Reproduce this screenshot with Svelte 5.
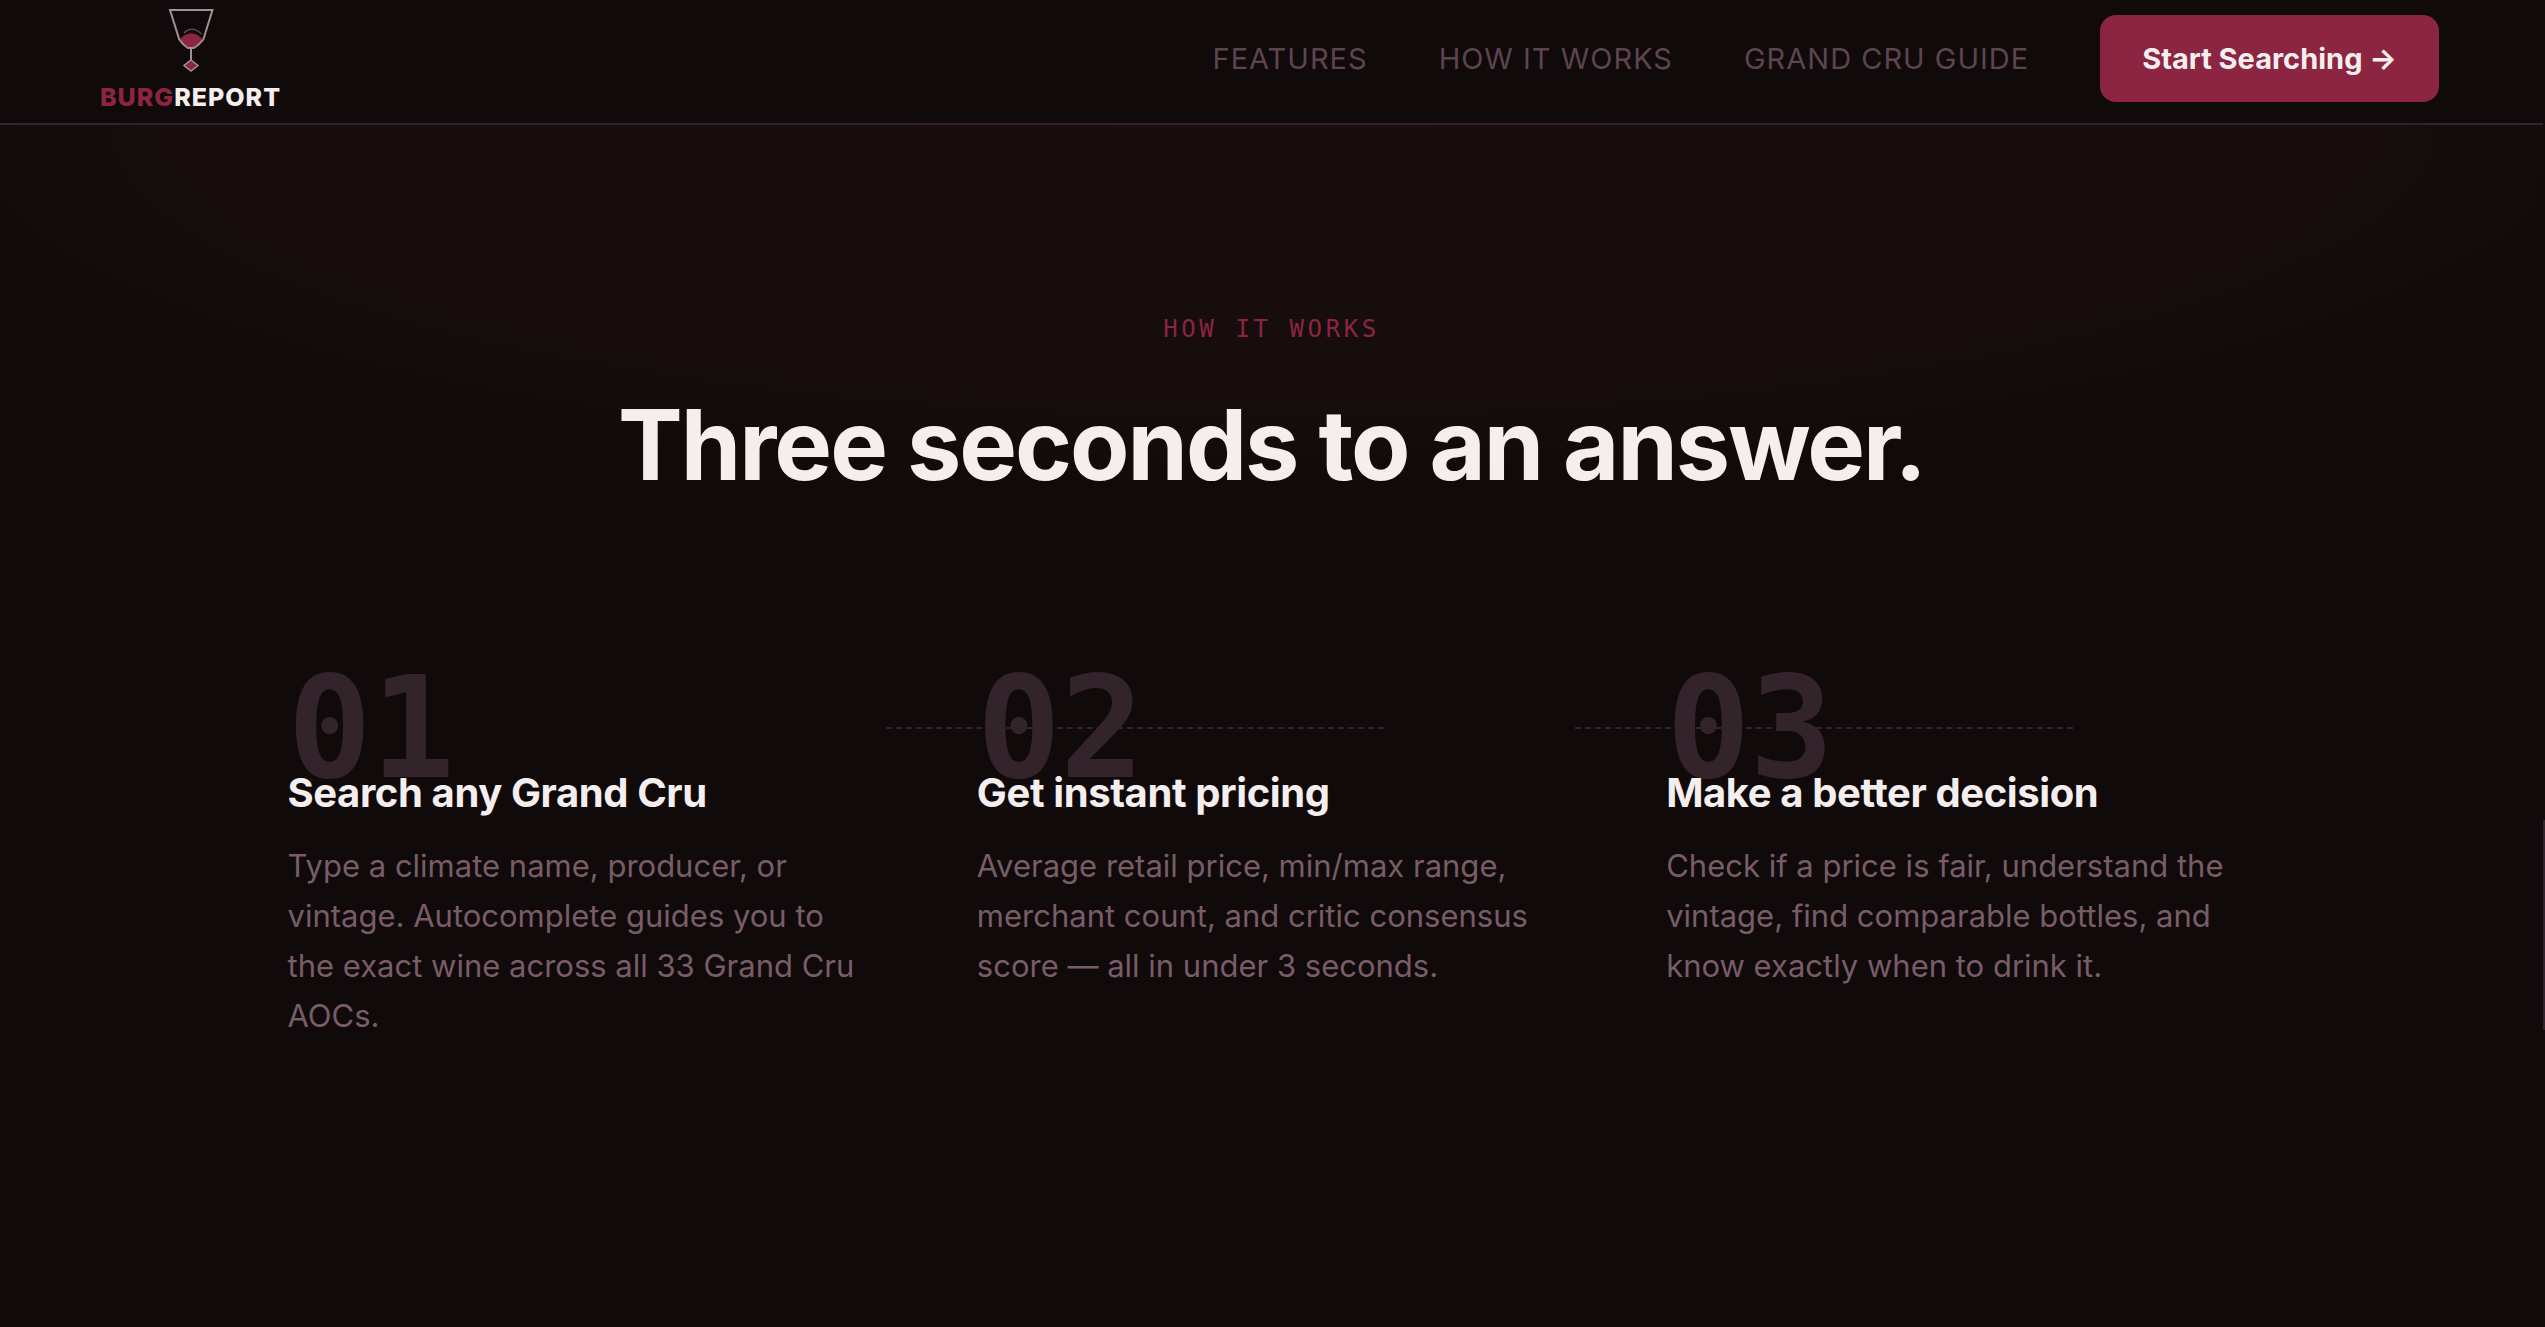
<script lang="ts">
	const links = [
		{label: "Features", href: "#features"},
		{label: "How it works", href: "#how"},
		{label: "Grand Cru Guide", href: "#guide"},
	]

	const steps = [
		{
			num: "01",
			title: "Search any Grand Cru",
			text: "Type a climate name, producer, or vintage. Autocomplete guides you to the exact wine across all 33 Grand Cru AOCs.",
		},
		{
			num: "02",
			title: "Get instant pricing",
			text: "Average retail price, min/max range, merchant count, and critic consensus score — all in under 3 seconds.",
		},
		{
			num: "03",
			title: "Make a better decision",
			text: "Check if a price is fair, understand the vintage, find comparable bottles, and know exactly when to drink it.",
		},
	]
</script>

<div class="page">
	<header>
		<a class="logo" href="#top">
			<svg viewBox="0 0 52 68" width="52" height="68" fill="none" aria-hidden="true">
				<path d="M14.5 31.5Q26 19 38 31.5Q34 37 29 40H23Q18 37 14.5 31.5Z" fill="#8b2541" />
				<path d="M5 2H47.500L38.300 31.500Q34 37 29 40H23Q18 37 14.300 31.500Z" stroke="#a08f95" stroke-width="2" />
				<path d="M19 25Q27 17 36.500 26" stroke="#6b4c5a" stroke-width="1.200" />
				<path d="M26 40V52" stroke="#a08f95" stroke-width="2" />
				<path d="M26 52L33 57.500L26 63L19 57.500Z" fill="#8b2541" stroke="#a08f95" stroke-width="1.500" />
			</svg>
			<span class="wordmark"><span class="burg">BURG</span>REPORT</span>
		</a>
		<nav>
			{#each links as link}
				<a class="link" href={link.href}>{link.label}</a>
			{/each}
			<a class="cta" href="#search">Start Searching →</a>
		</nav>
	</header>

	<section id="how">
		<p class="eyebrow">How it works</p>
		<h2>Three seconds to an answer.</h2>
		<div class="steps">
			{#each steps as step}
				<div class="step">
					<div class="num">{step.num}</div>
					<h3>{step.title}</h3>
					<p>{step.text}</p>
				</div>
			{/each}
		</div>
	</section>
</div>
<div class="thumb"></div>

<style>
	:global(body) {
		background: #100a0a;
	}

	.page {
		margin-right: 2px;
		min-height: 100vh;
		font-family: Inter, "Liberation Sans", sans-serif;
		color: #f5eeee;
		background: #100a0a;
	}

	header {
		display: flex;
		align-items: center;
		justify-content: space-between;
		box-sizing: border-box;
		height: 125px;
		padding: 0 104px 6px 100px;
		border-bottom: 2px solid #33232a;
	}

	a {
		color: inherit;
		text-decoration: none;
	}

	.logo {
		display: flex;
		flex-direction: column;
		align-items: center;
		gap: 3px;
		padding-top: 6px;
	}

	.wordmark {
		font-size: 25px;
		line-height: 36px;
		font-weight: 800;
		letter-spacing: 1px;
	}

	.burg {
		color: #8b2541;
	}

	nav {
		display: flex;
		align-items: center;
		gap: 71px;
	}

	.link {
		color: #5c454e;
		font-size: 29px;
		letter-spacing: 1px;
		text-transform: uppercase;
	}

	.cta {
		padding: 0 42px;
		border-radius: 16px;
		background: #8b2541;
		font-size: 29px;
		line-height: 87px;
		font-weight: 700;
		white-space: nowrap;
	}

	section {
		padding: 188px 48px;
		background: radial-gradient(57% 365px at 50% 0, #190d0f, #170d0e 74%, #100a0a);
	}

	.eyebrow {
		margin: 0 0 48px;
		color: #8b2541;
		font-family: "DejaVu Sans Mono", monospace;
		font-size: 24px;
		line-height: 32px;
		letter-spacing: 0.15em;
		text-align: center;
		text-transform: uppercase;
	}

	h2 {
		margin: 0 0 160px;
		font-size: 97px;
		line-height: 104px;
		font-weight: 700;
		letter-spacing: -2px;
		text-align: center;
	}

	.steps {
		display: grid;
		grid-template-columns: repeat(3, 1fr);
		gap: 100px;
		max-width: 1968px;
		margin: 0 auto;
	}

	.step {
		position: relative;
	}

	/* dashed connector running behind the next number */
	.step:not(:last-child)::after {
		content: "";
		position: absolute;
		top: 70px;
		left: calc(100% + 9px);
		width: 498px;
		border-top: 2px dashed #33232a;
	}

	.num {
		margin-bottom: -32px;
		color: #33232a;
		font-family: "DejaVu Sans Mono", monospace;
		font-size: 140px;
		line-height: 144px;
		font-weight: 700;
		letter-spacing: -1px;
	}

	h3 {
		position: relative;
		margin: 0 0 24px;
		font-size: 40px;
		line-height: 48px;
		font-weight: 700;
		letter-spacing: -0.01em;
	}

	.step p {
		max-width: 576px;
		margin: 0;
		color: #785c68;
		font-size: 31px;
		line-height: 50px;
	}

	.thumb {
		position: fixed;
		top: 820px;
		right: 0;
		width: 2px;
		height: 210px;
		background: #33232a;
	}
</style>
